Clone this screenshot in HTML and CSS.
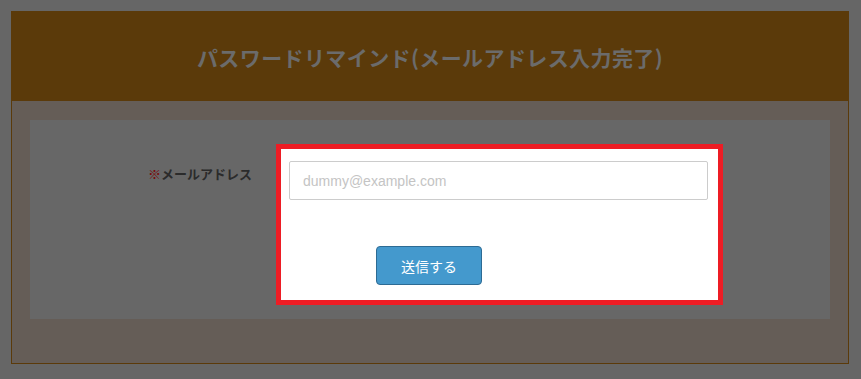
FILE: index.html
```html
<!DOCTYPE html>
<html lang="ja">
<head>
<meta charset="utf-8">
<title>パスワードリマインド</title>
<link rel="stylesheet" href="styles.css">
</head>
<body>
<div class="frame">
  <header class="head">
    <h1 class="title">パスワードリマインド(メールアドレス入力完了)</h1>
  </header>
  <div class="body">
    <div class="panel">
      <div class="label"><span class="req">※</span>メールアドレス</div>
      <div class="field">
        <input class="input" type="text" placeholder="dummy@example.com">
        <button class="btn" type="button">送信する</button>
      </div>
    </div>
  </div>
</div>
</body>
</html>
```
FILE: styles.css
```css
html, body {
  margin: 0;
  padding: 0;
}
body {
  background: #666666;
  font-family: "Noto Sans CJK JP", "Noto Sans", sans-serif;
  padding: 11px 12px 14px 11px;
}
.frame {
  border: 1px solid #5b3a0a;
  background: #655d57;
}
.head {
  background: #5b3a0a;
  height: 89px;
  display: flex;
  align-items: center;
  justify-content: center;
}
.title {
  margin: 0;
  font-size: 21px;
  font-weight: bold;
  color: #6b6b6b;
  letter-spacing: 0.4px;
}
.body {
  padding: 19px 18px 44px 18px;
}
.panel {
  background: #676767;
  display: flex;
  padding: 24px 0 14px 0;
}
.label {
  width: 222px;
  padding-right: 24px;
  text-align: right;
  font-size: 13px;
  font-weight: bold;
  color: #2b2b2b;
  padding-top: 20px;
}
.req {
  color: #7a0a0a;
}
.field {
  width: 419px;
  border: 5px solid #ed1c24;
  background: #ffffff;
  padding: 12px 10px 15px 8px;
  display: flex;
  flex-direction: column;
  align-items: flex-start;
}
.input {
  box-sizing: border-box;
  width: 419px;
  height: 39px;
  border: 1px solid #cccccc;
  border-radius: 2px;
  padding: 0 13px;
  font-family: "Liberation Sans", Arial, sans-serif;
  font-size: 14px;
  color: #555;
  outline: none;
}
.input::placeholder {
  color: #c4c4c4;
}
.btn {
  margin: 46px 0 0 87px;
  box-sizing: border-box;
  width: 106px;
  height: 39px;
  background: #4499cd;
  border: 1px solid #2d6b94;
  border-radius: 4px;
  color: #ffffff;
  font-family: "Noto Sans CJK JP", sans-serif;
  font-size: 14px;
  cursor: pointer;
}
```
